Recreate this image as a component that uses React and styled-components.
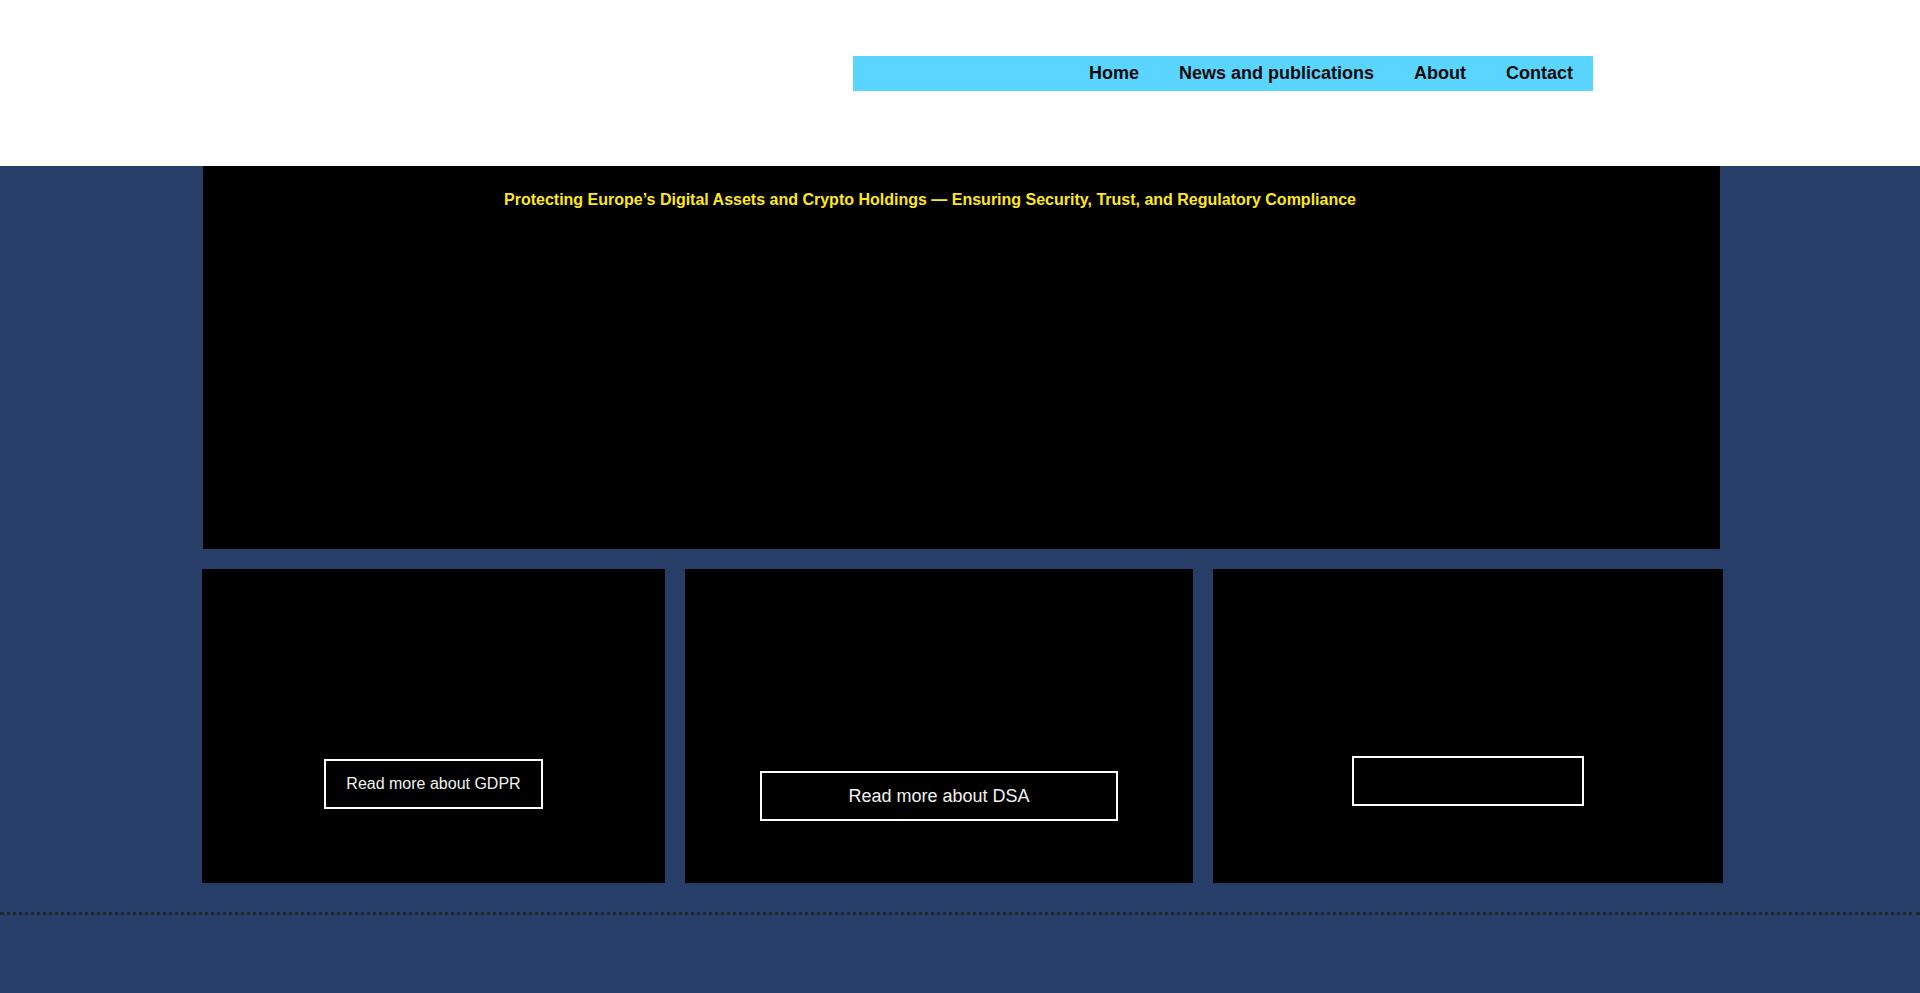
import React from "react";
import styled, { createGlobalStyle } from "styled-components";

const GlobalStyle = createGlobalStyle`
  html, body {
    margin: 0;
    padding: 0;
    background: #273f68;
    font-family: "Liberation Sans", Arial, sans-serif;
  }
  * { box-sizing: border-box; }
`;

const Page = styled.div`
  min-height: 993px;
  background: #273f68;
  display: flex;
  flex-direction: column;
`;

const Header = styled.header`
  height: 166px;
  background: #ffffff;
  display: flex;
  align-items: flex-start;
  padding: 56px 0 0 853px;
`;

const Nav = styled.nav`
  width: 740px;
  height: 35px;
  background: #5ad5ff;
  display: flex;
  justify-content: flex-end;
  align-items: center;
`;

const NavLink = styled.a`
  padding: 0 20px;
  font-size: 18px;
  font-weight: 700;
  color: #0a0a0a;
  text-decoration: none;
  white-space: nowrap;
`;

const Main = styled.main`
  display: flex;
  flex-direction: column;
  gap: 20px;
  padding-left: 202px;
`;

const Hero = styled.section`
  width: 1517px;
  height: 383px;
  margin-left: 1px;
  background: #000;
  padding: 25px 63px 0 0;
  text-align: center;
`;

const Tagline = styled.p`
  margin: 0;
  font-size: 16px;
  font-weight: 700;
  color: #ffe81a;
  white-space: nowrap;
`;

const CardRow = styled.div`
  display: grid;
  grid-template-columns: 463px 508px 510px;
  gap: 20px;
`;

const Card = styled.div`
  height: 314px;
  background: #000;
  display: flex;
  justify-content: center;
  align-items: flex-start;
  padding-top: ${(p) => p.$offset}px;
`;

const OutlineButton = styled.a`
  display: inline-flex;
  justify-content: center;
  align-items: center;
  height: 50px;
  ${(p) => (p.$width ? `width: ${p.$width}px;` : "padding: 0 20px;")}
  border: 2px solid #ffffff;
  color: #f2f2f2;
  font-size: ${(p) => p.$size}px;
  text-decoration: none;
  white-space: nowrap;
`;

const Footer = styled.footer`
  margin-top: 29px;
  border-top: 3px dotted #24242c;
  height: 80px;
`;

export default function App() {
  return (
    <Page>
      <GlobalStyle />
      <Header>
        <Nav>
          <NavLink href="#">Home</NavLink>
          <NavLink href="#">News and publications</NavLink>
          <NavLink href="#">About</NavLink>
          <NavLink href="#">Contact</NavLink>
        </Nav>
      </Header>
      <Main>
        <Hero>
          <Tagline>
            Protecting Europe’s Digital Assets and Crypto Holdings — Ensuring
            Security, Trust, and Regulatory Compliance
          </Tagline>
        </Hero>
        <CardRow>
          <Card $offset={190}>
            <OutlineButton href="#" $size={16}>
              Read more about GDPR
            </OutlineButton>
          </Card>
          <Card $offset={202}>
            <OutlineButton href="#" $size={18} $width={358}>
              Read more about DSA
            </OutlineButton>
          </Card>
          <Card $offset={187}>
            <OutlineButton href="#" $size={16} $width={232} aria-label="Read more" />
          </Card>
        </CardRow>
      </Main>
      <Footer />
    </Page>
  );
}
